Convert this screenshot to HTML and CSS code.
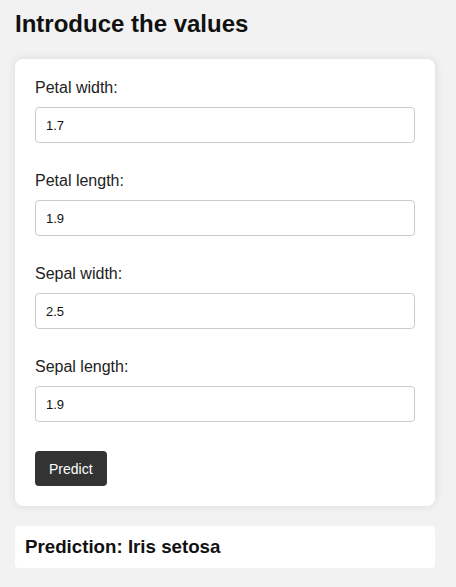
FILE: index.html
```html
<!DOCTYPE html>
<html lang="en">
<head>
<meta charset="utf-8">
<title>Iris prediction</title>
<link rel="stylesheet" href="styles.css">
</head>
<body>
<main class="page">
  <h2 class="title">Introduce the values</h2>
  <form class="card">
    <div class="group">
      <label class="label" for="pw">Petal width:</label>
      <input class="input" id="pw" type="text" value="1.7">
    </div>
    <div class="group">
      <label class="label" for="pl">Petal length:</label>
      <input class="input" id="pl" type="text" value="1.9">
    </div>
    <div class="group">
      <label class="label" for="sw">Sepal width:</label>
      <input class="input" id="sw" type="text" value="2.5">
    </div>
    <div class="group">
      <label class="label" for="sl">Sepal length:</label>
      <input class="input" id="sl" type="text" value="1.9">
    </div>
    <button class="button" type="button">Predict</button>
  </form>
  <div class="result">
    <h3 class="result-text">Prediction: Iris setosa</h3>
  </div>
</main>
</body>
</html>
```

FILE: styles.css
```css
* { box-sizing: border-box; }
html, body {
  margin: 0;
  padding: 0;
  background: #f2f2f2;
  font-family: "Liberation Sans", Arial, sans-serif;
  color: #222;
}
.page {
  padding: 10px 21px 0 15px;
  display: flex;
  flex-direction: column;
}
.title {
  margin: 0 0 21px;
  font-size: 24px;
  line-height: 28px;
  font-weight: bold;
  color: #111;
}
.card {
  background: #fff;
  border-radius: 8px;
  box-shadow: 0 0 10px rgba(0, 0, 0, 0.1);
  padding: 20px;
  display: flex;
  flex-direction: column;
  align-items: flex-start;
}
.group {
  width: 100%;
  display: flex;
  flex-direction: column;
  margin-bottom: 29px;
}
.label {
  font-size: 16px;
  line-height: 18px;
  margin-bottom: 10px;
  color: #222;
}
.input {
  width: 100%;
  height: 36px;
  border: 1px solid #ccc;
  border-radius: 4px;
  padding: 0 10px;
  font-family: "Liberation Sans", Arial, sans-serif;
  font-size: 13px;
  color: #111;
  background: #fff;
}
.button {
  height: 35px;
  padding: 0 14px;
  background: #333;
  color: #fff;
  border: none;
  border-radius: 4px;
  font-family: "Liberation Sans", Arial, sans-serif;
  font-size: 14px;
}
.result {
  margin-top: 20px;
  background: #fff;
  border-radius: 4px;
  padding: 10px;
}
.result-text {
  margin: 0;
  font-size: 18.72px;
  line-height: 22px;
  font-weight: bold;
  color: #111;
}
```
